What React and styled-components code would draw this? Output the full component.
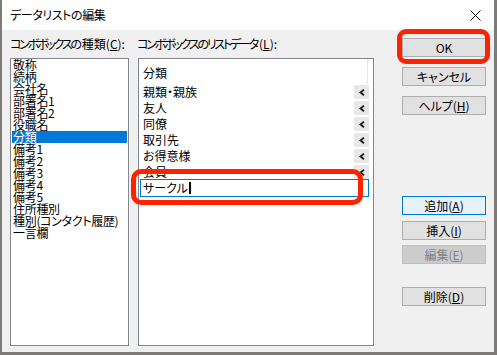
import React from "react";
import styled, { createGlobalStyle } from "styled-components";

const GlobalStyle = createGlobalStyle`
  html, body { margin: 0; padding: 0; background: #7d7b78; }
  body {
    width: 497px; height: 355px; overflow: hidden;
    font-family: "Noto Sans CJK JP", "Noto Sans", sans-serif;
  }
`;

const Dialog = styled.div`
  position: relative;
  margin-left: 2px;
  width: 492px;
  height: 352px;
  background: #f0f0f0;
  display: flex;
  flex-direction: column;
  font-size: 12px;
  font-feature-settings: "palt";
  color: #000;
`;

const TitleBar = styled.div`
  height: 30px;
  flex: none;
  background: #fff;
  display: flex;
  align-items: center;
  justify-content: space-between;
  padding: 0 13px 0 8px;
`;

const Title = styled.span`
  line-height: 12px;
  letter-spacing: -0.4px;
`;

const Content = styled.div`
  flex: 1;
  display: flex;
  padding: 8px 8px 6px 8px;
  min-height: 0;
`;

const Column = styled.div`
  width: ${(p) => p.$w}px;
  margin-right: ${(p) => p.$mr}px;
  display: flex;
  flex-direction: column;
  flex: none;
`;

const Label = styled.div`
  height: 12px;
  line-height: 12px;
  margin-bottom: 8px;
  margin-left: ${(p) => p.$ml || 0}px;
  white-space: nowrap;
`;

const Kana = styled.span`
  letter-spacing: -2.2px;
  margin-right: 2px;
`;

const U = styled.span`
  text-decoration: underline;
  text-underline-offset: 1px;
`;

const ListBox = styled.div`
  flex: 1;
  background: #fff;
  border: 1px solid #828790;
  box-sizing: border-box;
  padding: 0 1px;
  overflow: hidden;
`;

const ListItem = styled.div`
  height: 12px;
  line-height: 12px;
  padding-left: 1px;
  white-space: nowrap;
  letter-spacing: -0.3px;
  background: ${(p) => (p.$selected ? "#0078d7" : "transparent")};
  color: ${(p) => (p.$selected ? "#fff" : "#000")};
`;

const DataList = styled.div`
  flex: 1;
  background: #fff;
  border: 1px solid #828790;
  box-sizing: border-box;
  display: flex;
  flex-direction: column;
`;

const Header = styled.div`
  height: 25px;
  flex: none;
  display: flex;
`;

const HeaderCell = styled.div`
  width: 229px;
  border-right: 1px solid #e5e5e5;
  padding: 8px 0 0 4px;
  box-sizing: border-box;
  line-height: 12px;
`;

const Row = styled.div`
  height: 16px;
  flex: none;
  display: flex;
  align-items: center;
  padding: 0 4px 0 4px;
`;

const RowText = styled.span`
  flex: 1;
  line-height: 12px;
  white-space: nowrap;
`;

const ArrowButton = styled.div`
  width: 15px;
  height: 14px;
  background: #e8e8e8;
  display: flex;
  align-items: center;
  justify-content: center;
`;

const EditBox = styled.div`
  margin: -1px 4px 0 1px;
  height: 18px;
  border: 1px solid #0078d7;
  box-sizing: border-box;
  padding-left: 2px;
  display: flex;
  align-items: center;
  line-height: 12px;
`;

const Caret = styled.span`
  display: inline-block;
  width: 2px;
  height: 12px;
  background: #000;
  margin-left: 1px;
`;

const ButtonColumn = styled.div`
  width: 84px;
  display: flex;
  flex-direction: column;
  flex: none;
`;

const Btn = styled.button`
  width: 84px;
  height: 19px;
  margin: ${(p) => p.$mt || 0}px 0 0 0;
  padding: 0;
  font: inherit;
  font-size: 12px;
  line-height: 12px;
  font-feature-settings: "palt";
  box-sizing: border-box;
  border: 1px solid
    ${(p) =>
      p.$variant === "default" ? "#0078d7" : p.$variant === "disabled" ? "#bfbfbf" : "#adadad"};
  background: ${(p) =>
    p.$variant === "default" ? "#e5f1fb" : p.$variant === "disabled" ? "#cccccc" : "#e1e1e1"};
  color: ${(p) => (p.$variant === "disabled" ? "#838383" : "#000")};
`;

const Annotation = styled.div`
  position: absolute;
  left: ${(p) => p.$x}px;
  top: ${(p) => p.$y}px;
  width: ${(p) => p.$w}px;
  height: ${(p) => p.$h}px;
  border: 5px solid #ff2200;
  border-radius: ${(p) => p.$r}px;
  box-sizing: border-box;
  pointer-events: none;
`;

const CloseIcon = () => (
  <svg width="11" height="11" viewBox="0 0 11 11">
    <path d="M0.5 0.5 L10.5 10.5 M10.5 0.5 L0.5 10.5" stroke="#000" strokeWidth="1" />
  </svg>
);

const Chevron = () => (
  <svg width="6" height="7" viewBox="0 0 6 7">
    <polyline points="5,0.8 1.5,3.5 5,6.2" fill="none" stroke="#222" strokeWidth="1.9" />
  </svg>
);

const fields = [
  "敬称", "続柄", "会社名", "部署名1", "部署名2", "役職名", "分類",
  "備考1", "備考2", "備考3", "備考4", "備考5", "住所種別",
  "種別(コンタクト履歴)", "一言欄",
];

const entries = ["親類・親族", "友人", "同僚", "取引先", "お得意様", "会員"];

export default function App() {
  return (
    <>
      <GlobalStyle />
      <Dialog>
        <TitleBar>
          <Title>データリストの編集</Title>
          <CloseIcon />
        </TitleBar>
        <Content>
          <Column $w={119} $mr={9}>
            <Label>
              <Kana>コンボボックスの</Kana>種類(<U>C</U>):
            </Label>
            <ListBox>
              {fields.map((f) => (
                <ListItem key={f} $selected={f === "分類"}>
                  {f}
                </ListItem>
              ))}
            </ListBox>
          </Column>
          <Column $w={236} $mr={28}>
            <Label $ml={-1}>
              <Kana>コンボボックスのリストデータ</Kana>(<U>L</U>):
            </Label>
            <DataList>
              <Header>
                <HeaderCell>分類</HeaderCell>
              </Header>
              {entries.map((e) => (
                <Row key={e}>
                  <RowText>{e}</RowText>
                  <ArrowButton>
                    <Chevron />
                  </ArrowButton>
                </Row>
              ))}
              <EditBox>
                サークル
                <Caret />
              </EditBox>
            </DataList>
          </Column>
          <ButtonColumn>
            <Btn>OK</Btn>
            <Btn $mt={10}>キャンセル</Btn>
            <Btn $mt={10}>
              ヘルプ(<U>H</U>)
            </Btn>
            <Btn $mt={81} $variant="default">
              追加(<U>A</U>)
            </Btn>
            <Btn $mt={6}>
              挿入(<U>I</U>)
            </Btn>
            <Btn $mt={5} $variant="disabled">
              編集(<U>E</U>)
            </Btn>
            <Btn $mt={23}>
              削除(<U>D</U>)
            </Btn>
          </ButtonColumn>
        </Content>
        <Annotation $x={395} $y={29} $w={93} $h={35} $r={9} />
        <Annotation $x={129} $y={169} $w={232} $h={36} $r={10} />
      </Dialog>
    </>
  );
}
